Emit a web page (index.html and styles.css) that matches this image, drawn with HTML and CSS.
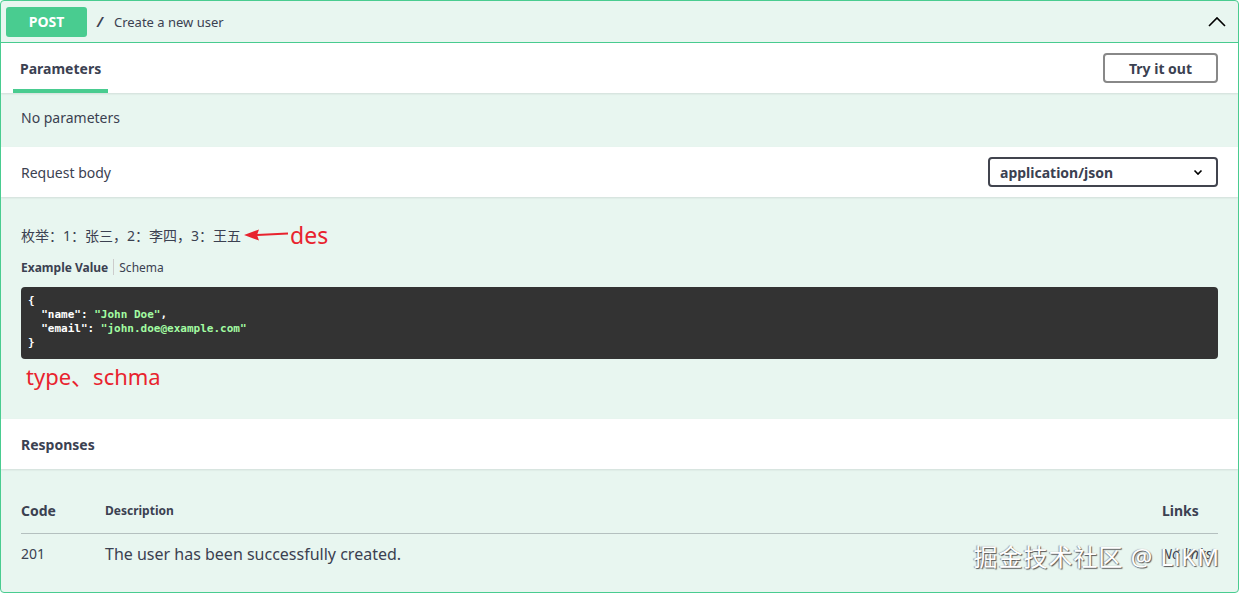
FILE: index.html
```html
<!DOCTYPE html>
<html lang="en">
<head>
    <meta charset="UTF-8">
    <meta name="viewport" content="width=device-width, initial-scale=1.0">
    <title>Create a new user</title>
    <link rel="stylesheet" href="styles.css">
</head>
<body>
    <div class="opblock">
        <div class="summary">
            <span class="method">POST</span>
            <span class="path">/</span>
            <span class="summary-text">Create a new user</span>
            <svg class="arrow-up" width="20" height="20" viewBox="0 0 20 20">
                <path d="M2 14 L10 6 L18 14" fill="none" stroke="#000" stroke-width="1.6"/>
            </svg>
        </div>

        <div class="section-header">
            <div class="tab">Parameters</div>
            <button class="try-out">Try it out</button>
        </div>
        <div class="no-params">No parameters</div>

        <div class="section-header">
            <div class="label">Request body</div>
            <div class="select">
                <span>application/json</span>
                <svg width="12" height="12" viewBox="0 0 12 12">
                    <path d="M2.5 4.5 L6 8 L9.5 4.5" fill="none" stroke="#000" stroke-width="1.6"/>
                </svg>
            </div>
        </div>
        <div class="body-section">
            <div class="description">
                <span>枚举：1：张三，2：李四，3：王五</span>
                <svg class="note-arrow" width="46" height="14" viewBox="0 0 46 14">
                    <path d="M14 7 L45 5.5" stroke="#e8232e" stroke-width="2.2"/>
                    <path d="M1 7 L16 1.5 L14 7 L16 12.5 Z" fill="#e8232e"/>
                </svg>
                <span class="note">des</span>
            </div>
            <div class="model-tabs">
                <span class="active">Example Value</span>
                <span class="sep"></span>
                <span>Schema</span>
            </div>
            <pre class="code">{
  <span class="key">"name"</span>: <span class="str">"John Doe"</span>,
  <span class="key">"email"</span>: <span class="str">"john.doe@example.com"</span>
}</pre>
            <div class="note note-big">type、schma</div>
        </div>

        <div class="section-header">
            <div class="label bold">Responses</div>
        </div>
        <div class="responses">
            <table>
                <tr>
                    <th class="col-code">Code</th>
                    <th class="col-desc">Description</th>
                    <th class="col-links">Links</th>
                </tr>
                <tr>
                    <td class="col-code">201</td>
                    <td class="col-desc desc-text">The user has been successfully created.</td>
                    <td class="col-links"><i>No links</i></td>
                </tr>
            </table>
            <div class="watermark">掘金技术社区 @ LiKM</div>
        </div>
    </div>
</body>
</html>
```

FILE: styles.css
```css
body {
    margin: 0;
    font-family: 'Noto Sans', 'Noto Sans CJK SC', sans-serif;
    color: #3b4151;
    background: #fff;
}

.opblock {
    box-sizing: border-box;
    width: 1239px;
    height: 593px;
    border: 1px solid #49cc90;
    border-radius: 4px;
    background: #e8f6f0;
    overflow: hidden;
}

.summary {
    display: flex;
    align-items: center;
    height: 41px;
    padding: 0 5px;
    border-bottom: 1px solid #49cc90;
}

.method {
    width: 81px;
    height: 30px;
    line-height: 30px;
    text-align: center;
    background: #49cc90;
    color: #fff;
    font-weight: 700;
    font-size: 14px;
    border-radius: 3px;
}

.path {
    margin-left: 10px;
    font-weight: 700;
    font-style: italic;
    font-size: 14px;
}

.summary-text {
    margin-left: 11px;
    font-size: 13px;
    flex: 1;
}

.arrow-up {
    margin-right: 6px;
}

.section-header {
    display: flex;
    align-items: center;
    justify-content: space-between;
    height: 50px;
    padding: 0 20px;
    background: #fff;
    box-shadow: 0 1px 2px rgba(0, 0, 0, 0.1);
    font-size: 14px;
}

.tab {
    align-self: stretch;
    display: flex;
    align-items: center;
    margin-left: -8px;
    padding: 4px 7px 0;
    border-bottom: 4px solid #49cc90;
    font-weight: 700;
}

.try-out {
    width: 115px;
    height: 30px;
    border: 2px solid #888;
    border-radius: 4px;
    background: #fff;
    font-family: inherit;
    font-weight: 700;
    font-size: 14px;
    color: #3b4151;
    cursor: pointer;
}

.no-params {
    padding: 0 20px 4px;
    height: 50px;
    line-height: 50px;
    font-size: 14px;
}

.label.bold {
    font-weight: 700;
}

.select {
    box-sizing: border-box;
    display: flex;
    align-items: center;
    justify-content: space-between;
    width: 230px;
    height: 30px;
    padding: 0 12px 0 10px;
    border: 2px solid #41444e;
    border-radius: 4px;
    font-weight: 700;
    font-size: 14px;
}

.body-section {
    padding: 30px 20px 28px;
}

.description {
    display: flex;
    align-items: center;
    height: 16px;
    font-size: 14px;
}

.note-arrow {
    margin-left: 2px;
}

.note {
    color: #e8232e;
    font-size: 23px;
}

.description .note {
    margin-left: 1px;
}

.model-tabs {
    display: flex;
    align-items: center;
    margin-top: 15px;
    height: 18px;
    font-size: 12px;
}

.model-tabs .active {
    font-weight: 700;
}

.model-tabs .sep {
    width: 1px;
    height: 16px;
    margin: 0 5px;
    background: #ccc;
}

.code {
    margin: 11px 0 0;
    padding: 7px 7px 9px;
    background: #333;
    border-radius: 4px;
    color: #fff;
    font-family: 'DejaVu Sans Mono', monospace;
    font-size: 11px;
    font-weight: 700;
    line-height: 14px;
}

.code .str {
    color: #a2fca2;
}

.note-big {
    margin-top: 2px;
    margin-left: 5px;
    line-height: 30px;
    font-size: 22px;
}

.responses {
    position: relative;
    padding: 20px 20px 0;
}

table {
    width: 100%;
    border-collapse: collapse;
}

th {
    padding: 12px 0 12px;
    line-height: 20px;
    text-align: left;
    font-weight: 700;
    font-size: 14px;
    border-bottom: 1px solid rgba(59, 65, 81, 0.3);
}

th.col-desc {
    font-size: 12px;
}

td {
    padding: 9px 0 11px;
    line-height: 22px;
    font-size: 14px;
    vertical-align: top;
}

.col-code {
    width: 84px;
}

.col-links {
    width: 56px;
}

.desc-text {
    font-size: 16px;
}

.watermark {
    position: absolute;
    right: 18px;
    bottom: 3px;
    font-size: 24px;
    color: #fff;
    text-shadow: 1px 1px 1px #555, -1px 0 1px #999;
    letter-spacing: 1px;
}
```
